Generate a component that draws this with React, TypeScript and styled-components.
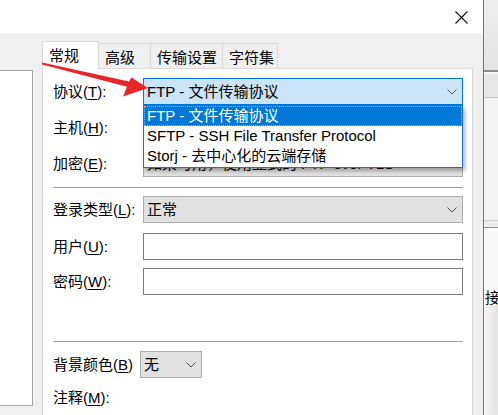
import React from "react";
import styled, { createGlobalStyle } from "styled-components";

const GlobalStyle = createGlobalStyle`
  html, body {
    margin: 0;
    padding: 0;
    background: #f0f0f0;
  }
  body {
    font-family: "Liberation Sans", "Noto Sans CJK SC", sans-serif;
    font-size: 15px;
    color: #000;
  }
`;

const tabs = [
  { name: "常规", width: 57 },
  { name: "高级", width: 53 },
  { name: "传输设置", width: 73 },
  { name: "字符集", width: 56 },
];

const protocols = [
  "FTP - 文件传输协议",
  "SFTP - SSH File Transfer Protocol",
  "Storj - 去中心化的云端存储",
];

const Chevron = () => (
  <svg width="10" height="6" viewBox="0 0 10 6">
    <polyline points="0.5,0.5 5,5 9.5,0.5" fill="none" stroke="#505050" strokeWidth="1" />
  </svg>
);

export default function App() {
  return (
    <Page>
      <GlobalStyle />
      <Window>
        <TitleBar>
          <svg width="13" height="13" viewBox="0 0 13 13">
            <path d="M0.5 0.5 L12.5 12.5 M12.5 0.5 L0.5 12.5" stroke="#111" strokeWidth="1.1" />
          </svg>
        </TitleBar>
        <Body>
          <LeftList />
          <TabArea>
            <TabStrip>
              {tabs.map((t, i) => (
                <Tab key={t.name} $active={i === 0} $width={t.width}>
                  {t.name}
                </Tab>
              ))}
            </TabStrip>
            <Panel>
              <Row $top={0}>
                <Label>
                  协议(<U>T</U>):
                </Label>
                <Combo $variant="focus">
                  <span>FTP - 文件传输协议</span>
                  <Chevron />
                  <DropList>
                    {protocols.map((p, i) => (
                      <DropItem key={p} $selected={i === 0}>
                        {p}
                      </DropItem>
                    ))}
                  </DropList>
                </Combo>
              </Row>
              <Row $top={9}>
                <Label>
                  主机(<U>H</U>):
                </Label>
                <Input />
              </Row>
              <Row $top={9}>
                <Label>
                  加密(<U>E</U>):
                </Label>
                <Combo $variant="gray">
                  <span>如果可用，使用显式的 FTP over TLS</span>
                  <Chevron />
                </Combo>
              </Row>
              <Separator $top={10} />
              <Row $top={8}>
                <Label>
                  登录类型(<U>L</U>):
                </Label>
                <Combo $variant="gray">
                  <span>正常</span>
                  <Chevron />
                </Combo>
              </Row>
              <Row $top={10}>
                <Label>
                  用户(<U>U</U>):
                </Label>
                <Input />
              </Row>
              <Row $top={8}>
                <Label>
                  密码(<U>W</U>):
                </Label>
                <Input />
              </Row>
              <Separator $top={46} />
              <Row $top={9}>
                <Label $width={87}>
                  背景颜色(<U>B</U>)
                </Label>
                <Combo $variant="gray" $width={62}>
                  <span>无</span>
                  <Chevron />
                </Combo>
              </Row>
              <Row $top={6}>
                <Label>
                  注释(<U>M</U>):
                </Label>
              </Row>
            </Panel>
          </TabArea>
        </Body>
      </Window>
      <Strip>
        <Band $h={70} $bg="linear-gradient(#ededed, #e4e4e4)" />
        <Band $h={2} $bg="#8c8c8c" />
        <Band $h={2} $bg="#f7f7f7" />
        <Band $h={23} $bg="#e8e8e8" />
        <Band $h={1} $bg="#c4c4c4" />
        <Band $h={122} $bg="#f4f4f4" />
        <Band $h={1} $bg="#d0d0d0" />
        <Band $h={6} $bg="#ececec" />
        <Band $h={1} $bg="#8e8e8e" />
        <Band $h={60} $bg="#f8f8f8" />
        <StripText>接</StripText>
        <Band $h={110} $bg="linear-gradient(90deg, #f6f6f6, #e2e2e2)" />
      </Strip>
      <ArrowLayer width="498" height="415" viewBox="0 0 498 415">
        <polygon
          points="42,62.6 129,81.5 131.5,77.5 148,88 123,96.5 127,86.8 42,64.4"
          fill="#e8262a"
        />
      </ArrowLayer>
    </Page>
  );
}

const Page = styled.div`
  position: relative;
  width: 498px;
  height: 415px;
  overflow: hidden;
  display: flex;
`;

const Window = styled.div`
  width: 483px;
  flex-shrink: 0;
  display: flex;
  flex-direction: column;
`;

const TitleBar = styled.div`
  height: 33px;
  background: #fff;
  display: flex;
  justify-content: flex-end;
  align-items: center;
  padding-right: 15px;
  padding-top: 2px;
  box-sizing: border-box;
`;

const Body = styled.div`
  flex: 1;
  display: flex;
  align-items: flex-start;
`;

const LeftList = styled.div`
  margin-top: 37px;
  width: 32px;
  height: 334px;
  background: #fff;
  border: 1px solid #a3a3a3;
  border-left: none;
`;

const TabArea = styled.div`
  margin-left: 9px;
  margin-top: 8px;
  width: 431px;
  align-self: stretch;
  display: flex;
  flex-direction: column;
`;

const TabStrip = styled.div`
  display: flex;
  align-items: flex-end;
  height: 27px;
`;

const Tab = styled.div<{ $active?: boolean; $width: number }>`
  position: relative;
  z-index: ${(p) => (p.$active ? 2 : 1)};
  box-sizing: border-box;
  width: ${(p) => p.$width}px;
  height: ${(p) => (p.$active ? 28 : 25)}px;
  margin-bottom: ${(p) => (p.$active ? -1 : 0)}px;
  margin-left: -1px;
  &:first-child {
    margin-left: 0;
  }
  padding: 4px 0 0 6px;
  line-height: 20px;
  background: ${(p) => (p.$active ? "#fff" : "#f0f0f0")};
  border: 1px solid #d9d9d9;
  border-bottom: none;
  white-space: nowrap;
`;

const Panel = styled.div`
  flex: 1;
  background: #fff;
  border: 1px solid #d9d9d9;
  border-bottom: none;
  padding: 9px 9px 0 10px;
`;

const Row = styled.div<{ $top: number }>`
  display: flex;
  align-items: center;
  height: 27px;
  margin-top: ${(p) => p.$top}px;
`;

const Label = styled.div<{ $width?: number }>`
  width: ${(p) => p.$width ?? 90}px;
  flex-shrink: 0;
  line-height: 20px;
  white-space: nowrap;
`;

const U = styled.span`
  text-decoration: underline;
  text-underline-offset: 2px;
`;

const Combo = styled.div<{ $variant: "focus" | "gray"; $width?: number }>`
  position: relative;
  box-sizing: border-box;
  height: 27px;
  ${(p) => (p.$width ? `width: ${p.$width}px;` : "flex: 1;")}
  display: flex;
  align-items: center;
  justify-content: space-between;
  padding: 0 5px 0 3px;
  line-height: 20px;
  white-space: nowrap;
  background: ${(p) => (p.$variant === "focus" ? "#cce4f7" : "#e1e1e1")};
  border: 1px solid ${(p) => (p.$variant === "focus" ? "#0078d7" : "#adadad")};
`;

const Input = styled.div`
  flex: 1;
  box-sizing: border-box;
  height: 27px;
  background: #fff;
  border: 1px solid #7a7a7a;
`;

const DropList = styled.div`
  position: absolute;
  z-index: 5;
  top: 26px;
  left: -1px;
  right: -1px;
  background: #fff;
  border: 1px solid #1a73c4;
  padding-bottom: 1px;
  box-shadow: 2px 3px 4px rgba(0, 0, 0, 0.3);
`;

const DropItem = styled.div<{ $selected?: boolean }>`
  height: 20px;
  line-height: 20px;
  padding-left: 3px;
  white-space: nowrap;
  color: ${(p) => (p.$selected ? "#fff" : "#000")};
  background: ${(p) => (p.$selected ? "#0078d7" : "#fff")};
  outline: ${(p) => (p.$selected ? "1px dotted #f7a43c" : "none")};
  outline-offset: -1px;
`;

const Separator = styled.div<{ $top: number }>`
  height: 1px;
  background: #a0a0a0;
  margin-top: ${(p) => p.$top}px;
`;

const Strip = styled.div`
  flex: 1;
  border-left: 1px solid #747474;
  display: flex;
  flex-direction: column;
`;

const Band = styled.div<{ $h: number; $bg: string }>`
  height: ${(p) => p.$h}px;
  flex-shrink: 0;
  background: ${(p) => p.$bg};
`;

const StripText = styled.div`
  height: 20px;
  line-height: 20px;
  background: #f8f8f8;
  padding-left: 1px;
  white-space: nowrap;
  overflow: hidden;
`;

const ArrowLayer = styled.svg`
  position: absolute;
  left: 0;
  top: 0;
  pointer-events: none;
  z-index: 10;
`;
